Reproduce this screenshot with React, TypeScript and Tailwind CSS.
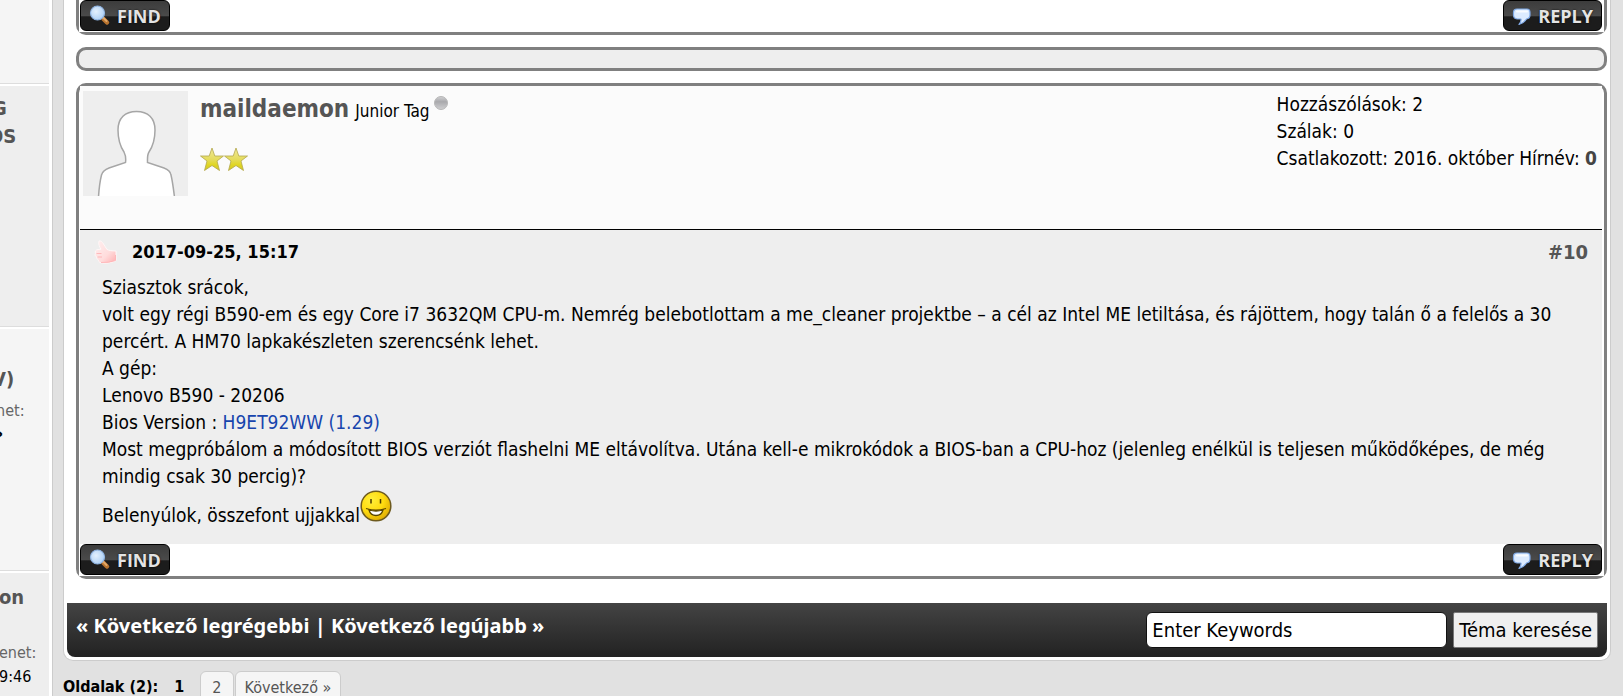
import React from "react";

// ============================================================================
// ICONS
// ============================================================================

const MagnifierIcon: React.FC = () => (
  <svg width="22" height="22" viewBox="0 0 22 22" aria-hidden="true">
    <defs>
      <radialGradient id="lens" cx="0.4" cy="0.4" r="0.7">
        <stop offset="0" stopColor="#e3f0fd" />
        <stop offset="1" stopColor="#a9cdf4" />
      </radialGradient>
    </defs>
    <path d="M14.5 14 18 17.5" stroke="#b9742f" strokeWidth="4.5" strokeLinecap="round" />
    <path d="M14.5 13 17.5 16" stroke="#e2a767" strokeWidth="2" strokeLinecap="round" />
    <circle cx="8.5" cy="8" r="7" fill="url(#lens)" stroke="#8fb3e0" strokeWidth="1.2" />
  </svg>
);

const BubbleIcon: React.FC = () => (
  <svg width="20" height="20" viewBox="0 0 20 20" aria-hidden="true">
    <path
      d="M5 3h10Q18 3 18 6.500V9Q18 12.500 14.500 13Q12 17 7 18.500Q9.500 15.500 9 13H5Q1.500 12.500 1.500 9V6.500Q1.500 3 5 3Z"
      fill="#dcebff"
      stroke="#7fa9e6"
      strokeWidth="1.2"
      strokeLinejoin="round"
    />
    <path d="M5 5.500h10" stroke="#f8fbff" strokeWidth="2" strokeLinecap="round" />
  </svg>
);

const Avatar: React.FC = () => (
  <svg
    width="105"
    height="105"
    viewBox="0 0 105 105"
    role="img"
    aria-label="maildaemon"
    className="shrink-0 bg-[#eeeeee]"
  >
    <path
      d="M15.500 106C16 98 17 90 18.500 84C19.500 80 22 78.500 26 77L42.500 71.500C43 68 42.500 64 41 61C37 55 35 47 35 39C35 27 42 20.500 53.500 20.500C65 20.500 72 27 72 39C72 47 70 55 66 61C64 64 64.500 68 64.500 71.500L81 77C85 78.500 87.500 80 88 84C89.500 90 90.500 98 91.500 106Z"
      fill="#ffffff"
      stroke="#a6a6a6"
      strokeWidth="1.500"
    />
  </svg>
);

const StarIcon: React.FC = () => (
  <svg width="24" height="24" viewBox="0 0 24 24" aria-hidden="true">
    <defs>
      <linearGradient id="star" x1="0" y1="0" x2="0" y2="1">
        <stop offset="0" stopColor="#f0ea9a" />
        <stop offset="0.5" stopColor="#e5dc5e" />
        <stop offset="0.75" stopColor="#e0d622" />
        <stop offset="1" stopColor="#d2c62a" />
      </linearGradient>
    </defs>
    <path
      d="M12 1 14.800 9H23.500L17 14 19.500 23.500 12 18.500 4.500 23.500 7 14 0.500 9H9.200Z"
      fill="url(#star)"
      stroke="#b3a74c"
      strokeWidth="0.8"
    />
  </svg>
);

const OfflineDot: React.FC = () => (
  <svg width="14" height="16" viewBox="0 0 14 16" role="img" aria-label="Offline" className="mb-4">
    <defs>
      <linearGradient id="dot" x1="0" y1="0" x2="0" y2="1">
        <stop offset="0" stopColor="#d2d2d4" />
        <stop offset="0.4" stopColor="#a9a9ac" />
        <stop offset="1" stopColor="#d0d0d2" />
      </linearGradient>
    </defs>
    <circle cx="7" cy="8" r="6.500" fill="url(#dot)" stroke="#b7b7b7" strokeWidth="1" />
  </svg>
);

const ThumbIcon: React.FC = () => (
  <svg width="24" height="24" viewBox="0 0 24 24" aria-hidden="true">
    <defs>
      <linearGradient id="thumb" x1="0" y1="0" x2="1" y2="1">
        <stop offset="0" stopColor="#fff0f0" />
        <stop offset="0.6" stopColor="#ffdcdc" />
        <stop offset="1" stopColor="#ffaeb0" />
      </linearGradient>
    </defs>
    <path
      d="M5 1C7 .5 8.500 2 9.500 4L13 9.500C15 10.500 18 11 22 11V20.500C19.500 22 15 23.200 11 23.200L7 22.800C5 22.500 4.500 21 4.500 20C3 19.500 2.500 18 2.800 17C1 16.500 .8 14.500 1.500 13.500C.5 11.500 2 9.500 4 9.500L7 9.200C5.500 7 4 3.500 5 1Z"
      fill="url(#thumb)"
      stroke="#fff7f7"
      strokeWidth="1"
    />
    <path
      d="M2.500 13.500h5M3.500 17h4.500M7 22.500Q15 23 21.500 20.500V15"
      fill="none"
      stroke="#ffb3b6"
      strokeWidth="0.9"
    />
  </svg>
);

const SmileyIcon: React.FC = () => (
  <svg
    width="32"
    height="32"
    viewBox="0 0 32 32"
    role="img"
    aria-label="smile"
    className="inline-block align-baseline"
  >
    <defs>
      <radialGradient id="smiley" cx="0.35" cy="0.3" r="0.8">
        <stop offset="0" stopColor="#ffef3a" />
        <stop offset="0.5" stopColor="#ffdc10" />
        <stop offset="1" stopColor="#d9a400" />
      </radialGradient>
    </defs>
    <circle cx="16" cy="16" r="14.800" fill="url(#smiley)" stroke="#6d5a1e" strokeWidth="1.500" />
    <path d="M11 9v4.500M20.500 9v4.500" stroke="#4a3a00" strokeWidth="1.500" />
    <path d="M6 18.500Q16 22 26 18.500" fill="none" stroke="#5a4700" strokeWidth="1.300" />
    <path
      d="M9 20Q16 22 23 20Q21.500 25.500 16 25.500Q10.500 25.500 9 20Z"
      fill="#fff"
      stroke="#5a4700"
      strokeWidth="1.300"
    />
  </svg>
);

// ============================================================================
// BUTTONS
// ============================================================================

interface PostButtonProps {
  icon: React.ReactNode;
  label: string;
}

const PostButton: React.FC<PostButtonProps> = ({ icon, label }) => (
  <button
    type="button"
    className="flex h-[31px] items-center gap-[6px] rounded-md border border-black bg-linear-to-b from-[#3c3c3c] from-0% via-[#4a4a4a] via-50% to-[#1c1c1c] to-55% px-2 font-['Open_Sans',sans-serif] text-lg leading-none font-bold text-[#e4e4e4] [text-shadow:0_0_2px_#000]"
  >
    {icon}
    {label}
  </button>
);

const PostFooter: React.FC = () => (
  <div className="flex justify-between bg-white pr-[2px] pb-px pl-px">
    <PostButton icon={<MagnifierIcon />} label="FIND" />
    <PostButton icon={<BubbleIcon />} label="REPLY" />
  </div>
);

// ============================================================================
// SIDEBAR
// ============================================================================

const Sidebar: React.FC = () => (
  <aside className="flex w-[53px] shrink-0 flex-col gap-[2px] overflow-hidden border-r border-[#cccccc] bg-white pr-[3px] whitespace-nowrap">
    <div className="h-[84px] shrink-0 border-b border-[#dddddd] bg-[#f5f5f5]" />
    <div className="h-[241px] shrink-0 border-b border-[#dddddd] bg-[#eeeeee] pt-2 text-xl leading-7 font-bold text-[#555555]">
      <p className="-ml-2">G</p>
      <p className="-ml-3">OS</p>
    </div>
    <div className="h-[242px] shrink-0 border-b border-[#dddddd] bg-[#f5f5f5] pt-9 text-base leading-7">
      <p className="-ml-2 text-xl leading-7 font-bold text-[#555555]">V)</p>
      <p className="-ml-1 pt-1 text-[#666666]">net:</p>
      <p className="-ml-1 text-xl leading-4 font-bold">›</p>
    </div>
    <div className="h-[240px] shrink-0 bg-[#eeeeee] pt-3 text-base leading-6">
      <p className="-ml-px text-xl leading-6 font-bold text-[#555555]">on</p>
      <p className="-ml-px pt-8 text-[#666666]">enet:</p>
      <p className="-ml-px">9:46</p>
    </div>
  </aside>
);

// ============================================================================
// POST
// ============================================================================

const PostHeader: React.FC = () => (
  <header className="flex min-h-36 justify-between border-b border-black bg-[#fbfbfb] pt-[5px] pr-[5px] pl-[3px]">
    <div className="flex gap-3">
      <Avatar />
      <div className="flex flex-col gap-5">
        <div className="flex items-end gap-1">
          <p className="flex items-baseline gap-[6px]">
            <a href="#maildaemon" className="text-2xl leading-9 font-bold text-[#555555]">
              maildaemon
            </a>
            <span className="text-[17px]">Junior Tag</span>
          </p>
          <OfflineDot />
        </div>
        <div className="flex">
          <StarIcon />
          <StarIcon />
        </div>
      </div>
    </div>
    <div className="text-[19px] leading-[27px]">
      <p>Hozzászólások: 2</p>
      <p>Szálak: 0</p>
      <p>
        Csatlakozott: 2016. október Hírnév: <strong className="text-[#444444]">0</strong>
      </p>
    </div>
  </header>
);

const Post: React.FC = () => (
  <article className="rounded-[10px] border-3 border-[#808080] bg-white">
    <div className="mr-[2px] ml-px">
      <PostHeader />
      <div className="min-h-[314px] bg-[#eeeeee] pt-2 pr-[14px] pl-[14px]">
        <div className="flex items-center justify-between">
          <div className="flex items-center gap-[14px] text-lg leading-7 font-bold">
            <ThumbIcon />
            <time>2017-09-25, 15:17</time>
          </div>
          <a href="#post10" className="text-xl leading-7 font-bold text-[#555555]">
            #10
          </a>
        </div>
        <div className="px-2 pt-2 text-[19px] leading-[27px]">
          <p>Sziasztok srácok,</p>
          <p>
            volt egy régi B590-em és egy Core i7 3632QM CPU-m. Nemrég belebotlottam a me_cleaner
            projektbe – a cél az Intel ME letiltása, és rájöttem, hogy talán ő a felelős a 30
            percért. A HM70 lapkakészleten szerencsénk lehet.
          </p>
          <p>A gép:</p>
          <p>Lenovo B590 - 20206</p>
          <p>
            Bios Version :{" "}
            <a href="#bios" className="text-[#1845ad]">
              H9ET92WW (1.29)
            </a>
          </p>
          <p>
            Most megpróbálom a módosított BIOS verziót flashelni ME eltávolítva. Utána kell-e
            mikrokódok a BIOS-ban a CPU-hoz (jelenleg enélkül is teljesen működőképes, de még
            mindig csak 30 percig)?
          </p>
          <p>
            Belenyúlok, összefont ujjakkal
            <SmileyIcon />
          </p>
        </div>
      </div>
    </div>
    <PostFooter />
  </article>
);

// ============================================================================
// THREAD FOOTER
// ============================================================================

const ThreadNav: React.FC = () => (
  <div className="flex min-h-[54px] items-start justify-between rounded-b-lg bg-linear-to-b from-[#444444] to-[#222222] px-[9px] pt-[9px]">
    <nav className="font-['Noto_Sans',sans-serif] text-xl leading-7 font-bold text-white">
      « <a href="#oldest">Következő legrégebbi</a> | <a href="#newest">Következő legújabb</a> »
    </nav>
    <form className="flex gap-[6px] text-xl" onSubmit={(e) => e.preventDefault()}>
      <input
        type="text"
        aria-label="Enter Keywords"
        defaultValue="Enter Keywords"
        className="h-9 w-[301px] rounded-md border border-[#111111] bg-white px-[5px] text-black"
      />
      <button
        type="submit"
        className="h-9 rounded-xs border border-[#777777] bg-[#efefef] px-[5px] text-black"
      >
        Téma keresése
      </button>
    </form>
  </div>
);

const Pagination: React.FC = () => (
  <nav className="flex items-start gap-px pt-[10px] text-base leading-8">
    <p className="font-bold">Oldalak (2):</p>
    <p className="px-[15px] font-bold">1</p>
    <a href="#page2" className="rounded-md border border-[#cccccc] bg-[#f5f5f5] px-[11px] text-[#555555]">
      2
    </a>
    <a href="#page2" className="rounded-md border border-[#cccccc] bg-[#f5f5f5] px-[9px] text-[#555555]">
      Következő »
    </a>
  </nav>
);

// ============================================================================
// MAIN APP COMPONENT
// ============================================================================

function App() {
  return (
    <div className="flex h-screen overflow-hidden bg-[#e1e1e1] font-['DejaVu_Sans_Condensed',Tahoma,sans-serif] text-black">
      <Sidebar />
      <main className="min-w-0 flex-1 pr-3 pl-[10px]">
        <section className="rounded-b-[10px] border border-t-0 border-[#cccccc] bg-white px-[3px] pb-[3px]">
          <div className="flex flex-col gap-3 pb-6 pl-[9px]">
            <div className="rounded-b-[10px] border-3 border-t-0 border-[#808080] bg-white">
              <PostFooter />
            </div>
            <div className="h-6 rounded-[10px] border-3 border-[#808080] bg-[#eeeeee]" />
            <Post />
          </div>
          <ThreadNav />
        </section>
        <Pagination />
      </main>
    </div>
  );
}

export default App;
